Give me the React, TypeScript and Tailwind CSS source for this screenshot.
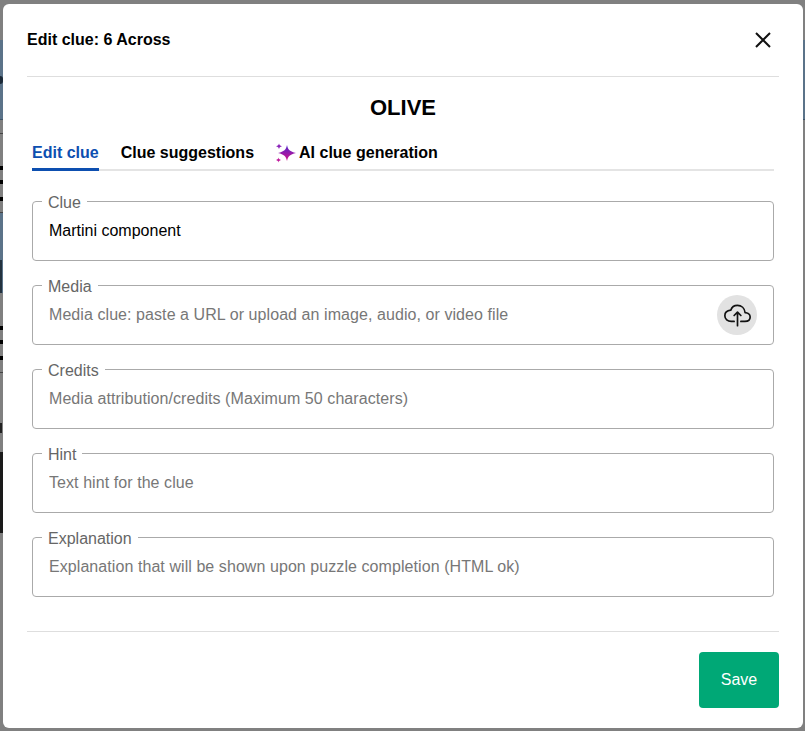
import { IoCloudUploadOutline } from "react-icons/io5";

const fields = [
  { label: "Clue", value: "Martini component", placeholder: "" },
  { label: "Media", value: "", placeholder: "Media clue: paste a URL or upload an image, audio, or video file", upload: true },
  { label: "Credits", value: "", placeholder: "Media attribution/credits (Maximum 50 characters)" },
  { label: "Hint", value: "", placeholder: "Text hint for the clue" },
  { label: "Explanation", value: "", placeholder: "Explanation that will be shown upon puzzle completion (HTML ok)" },
];

function Sparkle() {
  return (
    <svg width="20" height="21" viewBox="0 0 20 21" className="shrink-0 mt-[2px]">
      <defs>
        <linearGradient id="spark" x1="0" y1="0" x2="0" y2="1">
          <stop offset="0" stopColor="#4f26cc" />
          <stop offset="1" stopColor="#d8128a" />
        </linearGradient>
      </defs>
      <path d="M11 2 C11.8 6.6 14 8.6 20 10 C14 11.4 11.8 13.4 11 18 C10.2 13.4 8 11.4 2 10 C8 8.6 10.2 6.6 11 2 Z" fill="url(#spark)" />
      <path d="M3 0.5 C3.4 2 4 2.6 6 3.3 C4 4 3.4 4.6 3 6.2 C2.6 4.6 2 4 0 3.3 C2 2.6 2.6 2 3 0.5 Z" fill="#8a22b8" />
      <path d="M2.5 14.5 C2.8 15.9 3.3 16.4 5 17 C3.3 17.6 2.8 18.1 2.5 19.5 C2.2 18.1 1.7 17.6 0 17 C1.7 16.4 2.2 15.9 2.5 14.5 Z" fill="#c01a9c" />
    </svg>
  );
}

// page behind the dialog, only a few px of it show at the edges
function Backdrop() {
  return (
    <div className="h-[731px] overflow-hidden bg-[#808080] flex flex-col">
      <div className="h-10 shrink-0" />
      <div className="h-20 shrink-0 bg-[#5b7389] border-b border-[#3f5468] flex items-center">
        <div className="w-[3px] h-2 rounded-r bg-[#1c2a38]" />
      </div>
      <div className="w-[3px] flex flex-col">
        <div className="h-[14px] shrink-0 border-b border-[#444]" />
        <div className="h-8 shrink-0" />
        <div className="h-1 shrink-0 bg-black" />
        <div className="h-[10px] shrink-0" />
        <div className="h-1 shrink-0 bg-black" />
        <div className="h-[13px] shrink-0" />
        <div className="h-1 shrink-0 bg-black" />
        <div className="h-3 shrink-0 border-b border-[#444]" />
        <div className="h-20 shrink-0 bg-[#5b7389] pt-[47px]">
          <div className="h-[33px] w-[2px] bg-[#24323f]" />
        </div>
        <div className="h-[33px] shrink-0" />
        <div className="h-1 shrink-0 bg-black" />
        <div className="h-[10px] shrink-0" />
        <div className="h-1 shrink-0 bg-black" />
        <div className="h-3 shrink-0" />
        <div className="h-1 shrink-0 bg-black" />
        <div className="h-[13px] shrink-0 border-b border-[#444]" />
        <div className="h-[50px] shrink-0" />
        <div className="h-[10px] w-[2px] shrink-0 bg-[#222]" />
        <div className="h-[19px] shrink-0" />
        <div className="h-[81px] shrink-0 bg-[#1a1a1a]" />
      </div>
    </div>
  );
}

export default function App() {
  return (
    <div className="relative h-[731px] w-[805px] overflow-hidden font-['Liberation_Sans',Arial,sans-serif]">
      <Backdrop />
      <div className="absolute left-[3px] top-1 w-[800px] h-[724px] bg-white rounded-md flex flex-col px-6 text-black">
        <div className="h-[73px] shrink-0 border-b border-[#dedede] flex items-center justify-between">
          <h2 className="text-base font-bold leading-none">Edit clue: 6 Across</h2>
          <button className="mr-2 w-4 h-4 flex items-center justify-center">
            <svg width="16" height="16" viewBox="0 0 16 16" fill="none" stroke="#111" strokeWidth="2">
              <path d="M1 1 L15 15 M15 1 L1 15" />
            </svg>
          </button>
        </div>

        <div className="mt-[19px] text-center text-[22px] font-bold leading-6">OLIVE</div>

        <div className="mx-[5px] mt-[21px] h-[30px] shrink-0 border-b-2 border-[#e4e4e4] flex items-start gap-[22px] text-base font-bold">
          <div className="h-[30px] border-b-[3px] border-[#0d4fb0] text-[#0d4fb0] leading-[18px] pt-[3px]">Edit clue</div>
          <div className="leading-[18px] pt-[3px]">Clue suggestions</div>
          <div className="flex items-start gap-[3px]">
            <Sparkle />
            <span className="leading-[18px] pt-[3px]">AI clue generation</span>
          </div>
        </div>

        <div className="mx-[5px] mt-[21px] flex flex-col gap-[15px]">
          {fields.map((f) => (
            <fieldset key={f.label} className="h-[69px] border border-[#aaa] rounded px-4 flex">
              <legend className="ml-[-7px] px-[6px] text-base leading-[18px] text-[#666]">
                <span className="block translate-y-[2px]">{f.label}</span>
              </legend>
              <div className="flex items-center w-full h-[48px]">
                <input
                  defaultValue={f.value}
                  placeholder={f.placeholder}
                  className="w-full -mt-[6px] text-base leading-5 outline-none placeholder:text-[#777] placeholder:tracking-[0.07px]"
                />
                {f.upload && (
                  <div className="shrink-0 w-10 h-10 -mt-[6px] rounded-full bg-[#e2e2e2] flex items-center justify-center">
                    <IoCloudUploadOutline size={27} color="#111" />
                  </div>
                )}
              </div>
            </fieldset>
          ))}
        </div>

        <div className="mt-[34px] border-t border-[#dedede] pt-5 flex justify-end">
          <button className="w-20 h-14 rounded bg-[#00a876] text-white text-base">Save</button>
        </div>
      </div>
    </div>
  );
}
